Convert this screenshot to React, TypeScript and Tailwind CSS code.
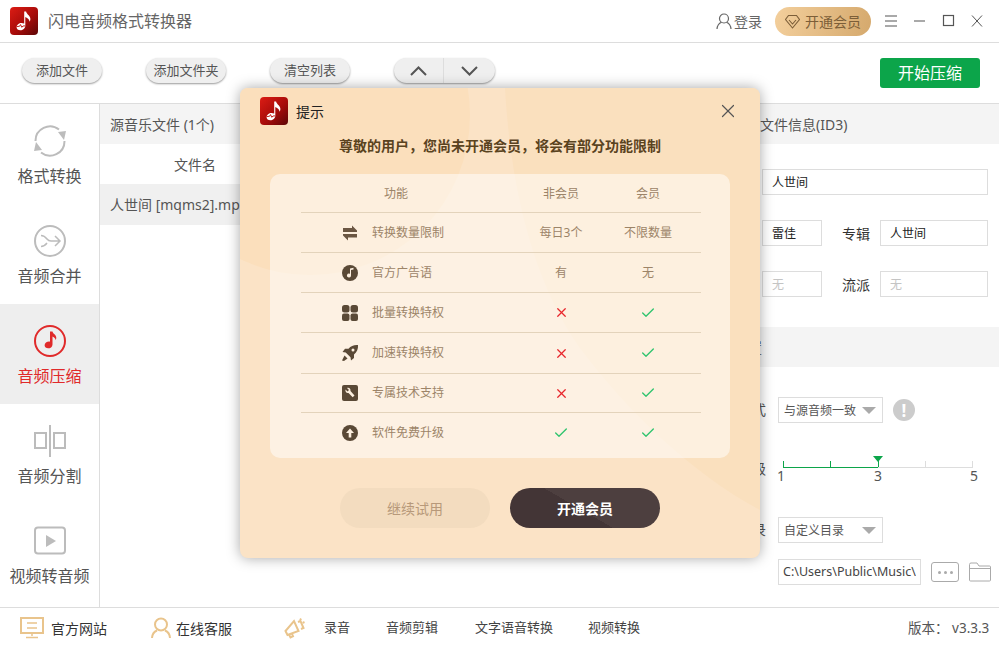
import { Check, X } from "lucide-react";
import type { ReactNode } from "react";

const Logo = ({ id }: { id: string }) => (
  <svg width="28" height="28" viewBox="0 0 28 28">
    <defs>
      <linearGradient id={id} x1="0" y1="0" x2="1" y2="1">
        <stop offset="0" stopColor="#dc1c14" />
        <stop offset="0.55" stopColor="#a80c0a" />
        <stop offset="1" stopColor="#5c0606" />
      </linearGradient>
    </defs>
    <rect width="28" height="28" rx="4" fill={`url(#${id})`} />
    <path
      d="M14.200 4.500h1.900c.4 2.800 4.200 4 4.300 7.500 0 1-.3 1.900-.9 2.700.1-2.400-2.400-4-4.200-4.700v8.700c0 2.600-2.400 4.500-5 4.500-2.100 0-3.700-1.200-3.700-3 0-2.400 2.400-4.300 4.900-4.300.9 0 1.800.2 2.700.7z"
      fill="#fff"
    />
    <path d="M6.500 19.500l3-.2 1-1.700 1.300 2.700 1.200-1.300 2.200-.1" stroke="#c5201a" strokeWidth="1" fill="none" />
  </svg>
);

const RefreshIcon = () => (
  <svg width="32" height="32" viewBox="0 0 32 32" fill="none" stroke="#bcbcbc" strokeWidth="2">
    <path d="M1.500 16A14.500 14.500 0 0 1 25 4.500" />
    <path d="M30.500 16A14.500 14.500 0 0 1 7 27.500" />
    <path d="M24 7l8-1-2 9z" fill="#bcbcbc" stroke="none" />
    <path d="M8 25l-8 1 2-9z" fill="#bcbcbc" stroke="none" />
  </svg>
);

const MergeIcon = () => (
  <svg width="32" height="32" viewBox="0 0 32 32" fill="none" stroke="#bcbcbc" strokeWidth="2">
    <circle cx="16" cy="16" r="15" />
    <path d="M7 10.500c3 0 4.500 1.500 6 3.500 1 1.300 2 2 4 2H25M7 21.500c3 0 4.500-1.500 6-3.500M21 11l5 5-5 5" strokeWidth="1.500" />
  </svg>
);

const NoteIcon = () => (
  <svg width="32" height="32" viewBox="0 0 32 32" fill="none">
    <circle cx="16" cy="16" r="15" stroke="#e02a2a" strokeWidth="2" />
    <path d="M16 6.500h2.500c.3 2.200 3.800 3.300 3.800 6.300 0 .9-.2 1.600-.7 2.200 0-1.900-2.100-3.200-3.100-3.600v8c0 2.500-2.300 3.900-4.400 3.900-1.900 0-3.500-1.200-3.500-3 0-2.200 2.300-3.700 4.400-3.700.4 0 .7 0 1 .1z" fill="#e02a2a" />
  </svg>
);

const SplitIcon = () => (
  <svg width="32" height="32" viewBox="0 0 32 32" fill="none" stroke="#bcbcbc" strokeWidth="2">
    <rect x="1" y="8" width="11" height="15" />
    <rect x="20" y="8" width="11" height="15" />
    <path d="M16 0v32" />
  </svg>
);

const VideoIcon = () => (
  <svg width="32" height="32" viewBox="0 0 32 32" fill="none">
    <rect x="1" y="2.500" width="30" height="26" rx="3" stroke="#bcbcbc" strokeWidth="2" />
    <path d="M12 10l10 6-10 6z" fill="#bcbcbc" />
  </svg>
);

const sideItems = [
  { label: "格式转换", icon: <RefreshIcon /> },
  { label: "音频合并", icon: <MergeIcon /> },
  { label: "音频压缩", icon: <NoteIcon />, active: true },
  { label: "音频分割", icon: <SplitIcon /> },
  { label: "视频转音频", icon: <VideoIcon /> },
];

const SwapIcon = () => (
  <svg width="18" height="18" viewBox="0 0 18 18" fill="#6b5642">
    <path d="M2 4h9V1.500l5 5v1.500H2zM16 10v3.500H7V16.500l-5-5V10z" />
  </svg>
);
const DiscIcon = () => (
  <svg width="18" height="18" viewBox="0 0 18 18">
    <circle cx="9" cy="9" r="8" fill="#5a4936" />
    <path d="M9 4.500l3.500-.8v1.800L10 6v5.500a2 2 0 1 1-1-1.700z" fill="#fdf0e0" />
  </svg>
);
const GridIcon = () => (
  <svg width="18" height="18" viewBox="0 0 18 18" fill="#5a4936">
    <rect x="1" y="1" width="7.500" height="7.500" rx="2.500" />
    <rect x="9.500" y="1" width="7.500" height="7.500" rx="2.500" />
    <rect x="1" y="9.500" width="7.500" height="7.500" rx="2" />
    <rect x="9.500" y="9.500" width="7.500" height="7.500" rx="2" />
  </svg>
);
const RocketIcon = () => (
  <svg width="18" height="18" viewBox="0 0 18 18" fill="#5a4936">
    <path d="M17 1c-4-.3-7 .8-9.500 3.700H4L1.500 8l3.200.5 4.800 4.800.5 3.200L13 14v-3.500C16 8 17.300 5 17 1z" />
    <circle cx="12" cy="6" r="1.500" fill="#fdf0e0" />
    <path d="M3.500 11.500l3 3-3.500 2.500-2-.5z" />
  </svg>
);
const WrenchIcon = () => (
  <svg width="18" height="18" viewBox="0 0 18 18">
    <rect x="1" y="1" width="16" height="16" rx="2" fill="#5a4936" />
    <path d="M4.500 5.500L6.500 7.500 8 6 6 4c1.800-.7 3.800.5 3.500 3l4 4.500-1.800 1.800L7.500 9C5.500 9.500 4 7.500 4.500 5.500z" fill="#fdf0e0" />
  </svg>
);
const UpIcon = () => (
  <svg width="18" height="18" viewBox="0 0 18 18">
    <circle cx="9" cy="9" r="8" fill="#5a4936" />
    <path d="M9 4.500L13 9h-2.700v4.500H7.700V9H5z" fill="#fdf0e0" />
  </svg>
);

const No = () => <X size={15} strokeWidth={2} className="text-[#e8262c]" />;
const Yes = () => <Check size={16} strokeWidth={2} className="text-[#2fc46e]" />;

const rows: { icon: ReactNode; name: string; free: ReactNode; vip: ReactNode; h: string }[] = [
  { icon: <SwapIcon />, name: "转换数量限制", free: "每日3个", vip: "不限数量", h: "h-10" },
  { icon: <DiscIcon />, name: "官方广告语", free: "有", vip: "无", h: "h-10" },
  { icon: <GridIcon />, name: "批量转换特权", free: <No />, vip: <Yes />, h: "h-10" },
  { icon: <RocketIcon />, name: "加速转换特权", free: <No />, vip: <Yes />, h: "h-[41px]" },
  { icon: <WrenchIcon />, name: "专属技术支持", free: <No />, vip: <Yes />, h: "h-[39px]" },
  { icon: <UpIcon />, name: "软件免费升级", free: <Yes />, vip: <Yes />, h: "h-10" },
];

const ToolButton = ({ children }: { children: ReactNode }) => (
  <button className="flex h-[25px] w-20 items-center justify-center rounded-full bg-[#efefef] text-[13px] text-[#555] shadow-[0_1px_2px_rgba(0,0,0,0.4)]">
    {children}
  </button>
);

const Field = ({ value, className, muted }: { value: string; className: string; muted?: boolean }) => (
  <div className={`flex h-[26px] items-center border border-[#ddd] pl-[9px] pt-px text-[12px] ${muted ? "text-[#c4c4c4]" : "text-[#222]"} ${className}`}>
    {value}
  </div>
);

const Select = ({ value }: { value: string }) => (
  <div className="flex h-[26px] w-[105px] items-center justify-between border border-[#ddd] pl-[5px] pr-[6px] pt-px text-[12px] text-[#555]">
    {value}
    <span className="h-0 w-0 border-x-[7px] border-t-[7px] border-x-transparent border-t-[#aaa]" />
  </div>
);

const Label = ({ children }: { children: ReactNode }) => (
  <span className="mr-3 w-[66px] whitespace-nowrap text-right leading-[26px]">{children}</span>
);

export default function App() {
  return (
    <div className="relative flex h-[648px] w-[999px] flex-col overflow-hidden bg-white font-['Noto_Sans','Noto_Sans_CJK_SC',sans-serif] text-[14px] text-[#555]">
      <header className="flex h-[43px] shrink-0 items-center border-b border-[#ddd] pl-[10px]">
        <Logo id="logo-a" />
        <span className="ml-[10px] text-[16px] text-[#666]">闪电音频格式转换器</span>
        <svg className="ml-[524px]" width="16" height="17" viewBox="0 0 16 17" fill="none" stroke="#666" strokeWidth="1.200">
          <circle cx="8" cy="5.500" r="4.500" />
          <path d="M1 16c.3-3.500 2.500-6 4.500-6.800M15 16c-.3-3.500-2.500-6-4.500-6.800" />
        </svg>
        <span className="ml-[2px] text-[#666]">登录</span>
        <div className="ml-[13px] flex h-[29px] w-[96px] items-center rounded-full bg-[linear-gradient(100deg,#f3cf9c,#d5a96d)] pl-[10px] text-[#7c5e38]">
          <svg width="15" height="15" viewBox="0 0 15 15" fill="none" stroke="#7c5e38" strokeWidth="1.100">
            <path d="M3.500 1.500h8l3 4-7 8.500-7-8.500zM4 6l3.500 4L11 6" />
          </svg>
          <span className="ml-[5px]">开通会员</span>
        </div>
        <svg className="ml-[14px]" width="98" height="14" viewBox="0 0 98 14" fill="none" stroke="#555" strokeWidth="1.200">
          <path d="M0 2h12M0 7h12M0 12h12M29 7h11" />
          <rect x="58.500" y="1.500" width="10" height="10" />
          <path d="M87 1.500l10 11M97 1.500l-10 11" strokeWidth="1" />
        </svg>
      </header>

      <div className="flex h-[61px] shrink-0 items-start border-b border-[#ddd] pl-[22px] pt-[15px]">
        <ToolButton>添加文件</ToolButton>
        <div className="ml-[44px]">
          <ToolButton>添加文件夹</ToolButton>
        </div>
        <div className="ml-[44px]">
          <ToolButton>清空列表</ToolButton>
        </div>
        <div className="ml-[44px] flex h-[25px] w-[101px] items-center rounded-full bg-[#efefef] shadow-[0_1px_2px_rgba(0,0,0,0.4)]">
          <span className="flex h-full w-[50px] items-center justify-center border-r border-[#ddd]">
            <svg width="17" height="10" viewBox="0 0 17 10" fill="none" stroke="#555" strokeWidth="2">
              <path d="M1 9l7.500-7.500L16 9" />
            </svg>
          </span>
          <span className="flex flex-1 items-center justify-center">
            <svg width="17" height="10" viewBox="0 0 17 10" fill="none" stroke="#555" strokeWidth="2">
              <path d="M1 1l7.500 7.500L16 1" />
            </svg>
          </span>
        </div>
        <button className="ml-[385px] flex h-[30px] w-[100px] items-center justify-center rounded-[3px] bg-[#0ca54a] text-[16px] text-white">
          开始压缩
        </button>
      </div>

      <main className="flex h-[504px] shrink-0 border-b border-[#ddd]">
        <aside className="w-[100px] shrink-0 border-r border-[#ddd]">
          {sideItems.map((item) => (
            <div
              key={item.label}
              className={`flex h-[100px] flex-col items-center pt-[21px] ${item.active ? "bg-[#eee] text-[#e02a2a]" : "text-[#555]"}`}
            >
              {item.icon}
              <span className="mt-[7px] text-[16px] leading-6">{item.label}</span>
            </div>
          ))}
        </aside>

        <section className="w-[600px] shrink-0">
          <div className="flex h-10 items-center bg-[#f4f4f4] pl-[10px]">源音乐文件 (1个)</div>
          <div className="flex h-10 items-center">
            <span className="w-[190px] text-center">文件名</span>
          </div>
          <div className="flex h-[41px] items-center bg-[#f0f0f0] pl-[10px]">人世间 [mqms2].mp3</div>
        </section>

        <section className="flex-1">
          <div className="flex h-10 items-center bg-[#f4f4f4] pl-8">音乐文件信息(ID3)</div>
          <div className="flex h-[183px] flex-col pl-[62px] pt-[25px]">
            <Field value="人世间" className="w-[226px]" />
            <div className="mt-[25px] flex items-center">
              <Field value="雷佳" className="w-[60px]" />
              <span className="ml-5 w-[38px] text-[#333]">专辑</span>
              <Field value="人世间" className="w-[108px]" />
            </div>
            <div className="mt-[25px] flex items-center">
              <Field value="无" muted className="w-[60px]" />
              <span className="ml-5 w-[38px] text-[#333]">流派</span>
              <Field value="无" muted className="w-[108px]" />
            </div>
          </div>
          <div className="flex h-10 items-center bg-[#f4f4f4] pl-[6px]">输出设置</div>
          <div className="flex items-center pt-[30px]">
            <Label>输出格式</Label>
            <Select value="与源音频一致" />
            <span className="ml-[10px] flex h-[22px] w-[22px] items-center justify-center rounded-full bg-[#ccc] text-[17px] font-bold leading-none text-white">!</span>
          </div>
          <div className="flex pt-[33px]">
            <Label>压缩等级</Label>
            <div className="relative ml-[5px] h-[30px] w-[190px]">
              <span className="absolute left-[90px] top-0 h-0 w-0 border-x-[5px] border-t-[6px] border-x-transparent border-t-[#0ca54a]" />
              <div className="absolute left-0 top-[11px] h-px w-full bg-[#ddd]" />
              <div className="absolute left-0 top-[11px] h-px w-[95px] bg-[#0ca54a]" />
              <div className="absolute left-0 top-[5px] h-[6px] w-px bg-[#0ca54a]" />
              <div className="absolute left-[47px] top-[5px] h-[6px] w-px bg-[#0ca54a]" />
              <div className="absolute left-[95px] top-[5px] h-[6px] w-px bg-[#0ca54a]" />
              <div className="absolute left-[142px] top-[5px] h-[6px] w-px bg-[#ddd]" />
              <div className="absolute left-[189px] top-[5px] h-[6px] w-px bg-[#ddd]" />
              <span className="absolute -left-[6px] top-[13px] w-2 text-center leading-[14px]">1</span>
              <span className="absolute left-[91px] top-[13px] w-2 text-center leading-[14px]">3</span>
              <span className="absolute left-[187px] top-[13px] w-2 text-center leading-[14px]">5</span>
            </div>
          </div>
          <div className="flex items-center pt-[31px]">
            <Label>输出目录</Label>
            <Select value="自定义目录" />
          </div>
          <div className="flex items-center pl-[78px] pt-4">
            <div className="flex h-[26px] w-[143px] items-center overflow-hidden whitespace-nowrap border border-[#ddd] px-[4px] pt-px text-[12.500px] text-[#444]">
              <span className="w-[133px] overflow-hidden">C:\Users\Public\Music\</span>
            </div>
            <div className="ml-[10px] flex h-5 w-7 items-center justify-center gap-[3px] rounded-[3px] border border-[#aaa]">
              <span className="h-[3px] w-[3px] rounded-full bg-[#aaa]" />
              <span className="h-[3px] w-[3px] rounded-full bg-[#aaa]" />
              <span className="h-[3px] w-[3px] rounded-full bg-[#aaa]" />
            </div>
            <svg className="ml-[10px]" width="22" height="20" viewBox="0 0 22 20" fill="none" stroke="#aaa">
              <path d="M.5 4V2.500a1.500 1.500 0 0 1 1.500-1.500h6L10 4h10.500A1 1 0 0 1 21.500 5v13a1 1 0 0 1-1 1h-19a1 1 0 0 1-1-1zM.5 6.500h21" />
            </svg>
          </div>
        </section>
      </main>

      <footer className="flex flex-1 items-center pl-5">
        <svg width="24" height="22" viewBox="0 0 24 22" fill="none" stroke="#e9c48c" strokeWidth="2">
          <rect x="1" y="1" width="22" height="15" />
          <path d="M7 6h10M7 11h10M12 16v3M6 20.500h12" strokeWidth="1.500" />
        </svg>
        <span className="ml-[7px] text-[#333]">官方网站</span>
        <svg className="ml-[44px]" width="20" height="22" viewBox="0 0 20 22" fill="none" stroke="#e9c48c" strokeWidth="2">
          <circle cx="10" cy="7.500" r="6" />
          <path d="M1 21c.3-4 2.500-6.500 5-7.500M19 21c-.3-4-2.500-6.500-5-7.500" />
        </svg>
        <span className="ml-[5px] text-[#333]">在线客服</span>
        <svg className="ml-[52px]" width="22" height="22" viewBox="0 0 22 22" fill="none" stroke="#e9c48c" strokeWidth="2">
          <path d="M1.500 14l2 4 11-4-4.500-10zM5 17.500l1.500 3 2.500-1.200-1-2.500M14 5l2.500-1 3 7-2.500 1M17 1.500l-.8 1.800M20.500 5l-1.800.8" />
        </svg>
        <span className="ml-[18px] text-[13px] text-[#444]">录音</span>
        <span className="ml-9 text-[13px] text-[#444]">音频剪辑</span>
        <span className="ml-[37px] text-[13px] text-[#444]">文字语音转换</span>
        <span className="ml-[35px] text-[13px] text-[#444]">视频转换</span>
        <span className="ml-[268px] text-[13.500px] text-[#555]">版本： v3.3.3</span>
      </footer>

      <div className="absolute left-[240px] top-[88px] h-[470px] w-[520px] overflow-hidden rounded-[8px] bg-[#fbe3c6] shadow-[0_0_14px_rgba(0,0,0,0.35)]">
        <svg className="absolute inset-0" width="520" height="470" viewBox="0 0 520 470">
          <circle cx="70" cy="27" r="160" fill="#fbdfbc" />
          <path d="M265 0C270 90 290 190 340 260 385 320 450 385 520 422V0z" fill="#fae0be" />
        </svg>
        <div className="relative flex h-full flex-col">
          <div className="flex items-center pl-5 pt-[9px]">
            <Logo id="logo-b" />
            <span className="ml-2 text-[#222]">提示</span>
            <X size={22} strokeWidth={1.300} className="ml-[393px] text-[#555]" />
          </div>
          <p className="mt-[11px] text-center font-bold leading-5 text-[#5a431f]">
            尊敬的用户，您尚未开通会员，将会有部分功能限制
          </p>
          <div className="mx-auto mt-[18px] h-[284px] w-[460px] rounded-[10px] bg-white/50 pl-[31px] pr-[29px] text-[12px] text-[#9c8468]">
            <div className="grid h-[39px] grid-cols-[213px_80px_80px] items-center gap-x-[7px] border-b border-[#e3d3bb] pt-px">
              <span className="pl-[83px]">功能</span>
              <span className="text-center">非会员</span>
              <span className="text-center">会员</span>
            </div>
            {rows.map((row, i) => (
              <div
                key={row.name}
                className={`grid grid-cols-[213px_80px_80px] items-center gap-x-[7px] ${row.h} ${i < rows.length - 1 ? "border-b border-[#e3d3bb]" : ""}`}
              >
                <div className="flex items-center pl-10">
                  {row.icon}
                  <span className="ml-[13px]">{row.name}</span>
                </div>
                <div className="flex justify-center">{row.free}</div>
                <div className="flex justify-center">{row.vip}</div>
              </div>
            ))}
          </div>
          <div className="mt-[30px] flex justify-center gap-5">
            <button className="h-10 w-[150px] rounded-full bg-[#f3dcbf] text-[#b7997a]">继续试用</button>
            <button className="h-10 w-[150px] rounded-full bg-[linear-gradient(30deg,#433536_47%,#4d3f3f_47%)] font-bold text-white">
              开通会员
            </button>
          </div>
        </div>
      </div>
    </div>
  );
}
